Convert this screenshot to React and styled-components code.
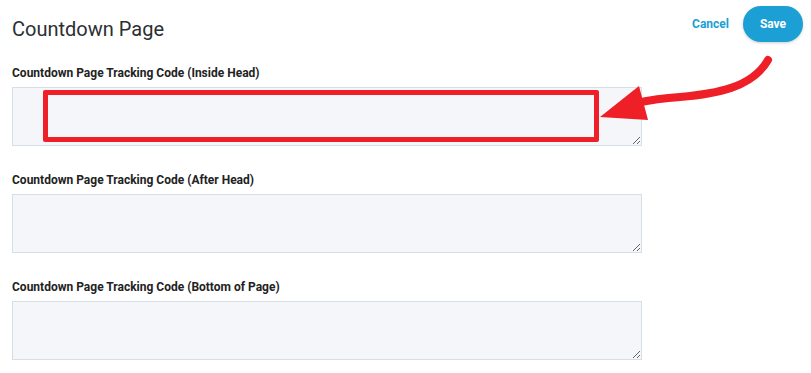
import React from "react";
import styled, { createGlobalStyle } from "styled-components";

const GlobalStyle = createGlobalStyle`
  html, body {
    margin: 0;
    padding: 0;
    background: #ffffff;
    font-family: Roboto, "Liberation Sans", sans-serif;
  }
`;

const Page = styled.div`
  position: relative;
  width: 811px;
  height: 373px;
  box-sizing: border-box;
  padding: 0 12px;
  overflow: hidden;
`;

const Header = styled.div`
  display: flex;
  align-items: center;
  justify-content: space-between;
  height: 46px;
  padding-top: 5px;
  box-sizing: border-box;
`;

const Title = styled.h1`
  margin: 6px 0 0;
  font-size: 20px;
  font-weight: 400;
  color: #2b2f33;
`;

const Actions = styled.div`
  display: flex;
  align-items: center;
  gap: 14px;
  margin-right: -4px;
  margin-top: -3px;
`;

const CancelButton = styled.button`
  border: none;
  background: none;
  padding: 0;
  font-family: inherit;
  font-size: 12px;
  font-weight: 700;
  color: #1a9fd6;
  cursor: pointer;
`;

const SaveButton = styled.button`
  border: none;
  width: 60px;
  height: 36px;
  border-radius: 18px;
  background: #1b9fd5;
  color: #ffffff;
  font-family: inherit;
  font-size: 12px;
  font-weight: 700;
  box-shadow: 0 1px 3px rgba(0, 0, 0, 0.2);
  cursor: pointer;
`;

const Field = styled.div`
  display: flex;
  flex-direction: column;
  margin-top: ${(p) => p.$top}px;
`;

const Label = styled.label`
  font-size: 12px;
  font-weight: 700;
  color: #222;
  margin-bottom: 7px;
  line-height: 14px;
`;

const Area = styled.textarea`
  width: 630px;
  height: 59px;
  box-sizing: border-box;
  background: #f4f6f9;
  border: 1px solid #d5dfe5;
  border-radius: 0;
  margin: 0;
  resize: both;
  outline: none;
`;

const Highlight = styled.div`
  position: absolute;
  left: 43px;
  top: 90px;
  width: 556px;
  height: 52px;
  box-sizing: border-box;
  border: 5px solid #ee1f26;
  border-radius: 2px;
  pointer-events: none;
`;

const Arrow = styled.svg`
  position: absolute;
  left: 0;
  top: 0;
  pointer-events: none;
`;

export default function App() {
  const fields = [
    { label: "Countdown Page Tracking Code (Inside Head)", top: 20 },
    { label: "Countdown Page Tracking Code (After Head)", top: 27 },
    { label: "Countdown Page Tracking Code (Bottom of Page)", top: 27 },
  ];
  return (
    <>
      <GlobalStyle />
      <Page>
        <Header>
          <Title>Countdown Page</Title>
          <Actions>
            <CancelButton>Cancel</CancelButton>
            <SaveButton>Save</SaveButton>
          </Actions>
        </Header>
        {fields.map((f) => (
          <Field key={f.label} $top={f.top}>
            <Label>{f.label}</Label>
            <Area />
          </Field>
        ))}
        <Highlight />
        <Arrow width="811" height="373" viewBox="0 0 811 373">
          <path
            d="M768 60 C 752 88, 715 94, 680 97 C 665 98, 650 100, 636 103"
            fill="none"
            stroke="#ee1f26"
            strokeWidth="8"
            strokeLinecap="round"
          />
          <polygon points="600,117 639,86 648,120" fill="#ee1f26" />
        </Arrow>
      </Page>
    </>
  );
}
